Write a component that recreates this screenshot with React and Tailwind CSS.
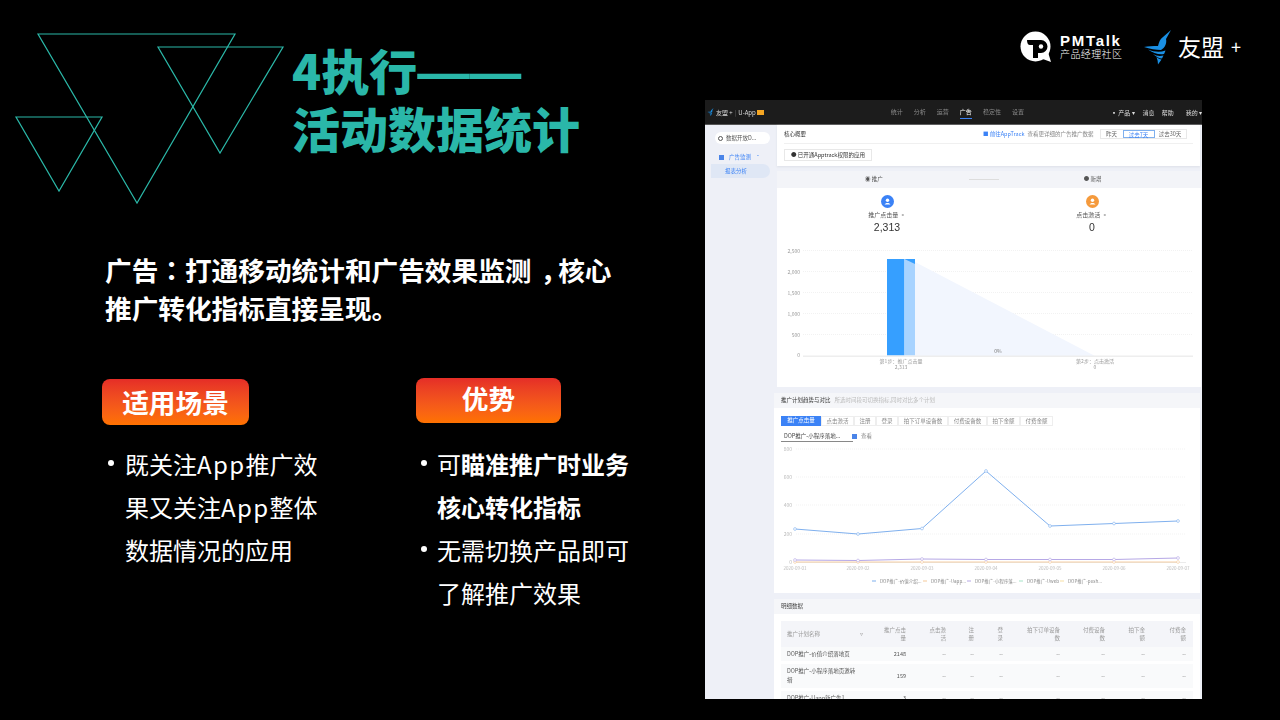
import React from "react";

const navItems = [
  { label: "统计", cls: "ml-[0px]" },
  { label: "分析", cls: "ml-[11px]" },
  { label: "运营", cls: "ml-[11px]" },
  { label: "广告", cls: "ml-[11px] text-white border-b border-[#3b82f6]" },
  { label: "稳定性", cls: "ml-[11px]" },
  { label: "设置", cls: "ml-[11px]" },
];

const tabs = [
  { label: "推广点击量", w: "w-[40px]", active: true },
  { label: "点击激活", w: "w-[33px]" },
  { label: "注册", w: "w-[22px]" },
  { label: "登录", w: "w-[22px]" },
  { label: "拍下订单设备数", w: "w-[50px]" },
  { label: "付费设备数", w: "w-[39px]" },
  { label: "拍下金额", w: "w-[33px]" },
  { label: "付费金额", w: "w-[33px]" },
];

const tableHead = [
  ["推广点击", "量"],
  ["点击激", "活"],
  ["注", "册"],
  ["登", "录"],
  ["拍下订单设备", "数"],
  ["付费设备", "数"],
  ["拍下金", "额"],
  ["付费金", "额"],
];

const tableRows = [
  { name: ["DOP推广-价值介绍落地页"], clicks: "2148", h: "h-[14px]" },
  { name: ["DOP推广-小程序落地页邀转", "措"], clicks: "159", h: "h-[24px]" },
  { name: ["DOP推广-Uapp新广告1"], clicks: "3", h: "h-[14px]" },
];

const gridCols = "grid grid-cols-[94px_36px_40px_28px_29px_57px_45px_40px_41px]";

const xs = [795, 858, 922, 986, 1050, 1114, 1178];
const dates = ["2020-09-01", "2020-09-02", "2020-09-03", "2020-09-04", "2020-09-05", "2020-09-06", "2020-09-07"];
const blueYs = [530, 535, 529.5, 472, 527, 524.5, 522];
const purpleYs = [561, 561.5, 560, 560.5, 560.5, 560.5, 559];
const orangeYs = [563, 563, 563, 563, 563, 563, 563];

const legend = [
  { x: 872, color: "#7fb0ee", label: "DOP推广-价值介绍..." },
  { x: 923, color: "#f5c99a", label: "DOP推广-Uapp..." },
  { x: 967, color: "#b6a8e6", label: "DOP推广-小程序落..." },
  { x: 1019, color: "#a5e3c8", label: "DOP推广-Uweb" },
  { x: 1060, color: "#f8dfa4", label: "DOP推广-push..." },
];

const toPoints = (ys) => ys.map((y, i) => `${xs[i]},${y}`).join(" ");

const Triangles = () => (
  <svg className="absolute left-0 top-0" width="300" height="220" fill="none" stroke="#2bb8a8" strokeWidth="1.2">
    <polygon points="38,34 235,34 137,203" />
    <polygon points="158,47 283,47 220,153" />
    <polygon points="16,117 102,117 59,191" />
  </svg>
);

const Bird = ({ className }) => (
  <svg className={className} viewBox="0 0 30 36" fill="#1a8fe3">
    <path d="M28 1 L20 8 C17 10 16 13 15 17 C10 17 5 17 1 18 C7 20 13 21 18 21 C22 19 24 14 23 10 Z" />
    <path d="M5 20.5 C11 23 17 23.5 22.5 21.5 C22 23 21.5 24 21 25 C16 26 10 24 5 20.5 Z" />
    <path d="M10 25 C13 27 17 27.5 20.5 26.5 C20 27.5 19.5 28.5 19 29.5 C16 29.5 13 27.5 10 25 Z" />
    <path d="M13.5 28 C15 29.5 17 30.5 18.5 30.5 C17.5 32 16 34 15 35.5 C15 33 14.5 30.5 13.5 28 Z" />
  </svg>
);

const PmLogo = () => (
  <svg width="32" height="32" viewBox="0 0 32 32">
    <circle cx="15.5" cy="15.5" r="15" fill="#fff" />
    <path d="M20 27 L31 31 L28 21 Z" fill="#fff" />
    <path d="M7 9 H21 A6.5 6.5 0 0 1 21 22 H18 V27 H13 V14 H10 C8 14 7 12 7 9 Z" fill="#000" />
    <circle cx="21" cy="15.5" r="2.2" fill="#fff" />
  </svg>
);

// round badge above each funnel figure
const FunnelIcon = ({ className }) => (
  <span className={`flex h-[13px] w-[13px] items-center justify-center rounded-full ${className}`}>
    <svg width="7" height="7" viewBox="0 0 7 7" fill="#fff">
      <circle cx="3.5" cy="2.2" r="1.7" />
      <path d="M0.6 6.6 C1 4.4 6 4.4 6.4 6.6 Z" />
    </svg>
  </span>
);

const ScreenTopBar = () => (
  <div className="flex h-[25px] items-center bg-[#1c1c1c] border-b border-[#555] text-[6px] text-[#8a8a8a]">
    <Bird className="ml-[2px] h-[10px] w-[8px]" />
    <span className="ml-[2px] text-[#ddd]">友盟 +</span>
    <span className="ml-[2px] text-[#666]">|</span>
    <span className="ml-[2px] text-[#ddd]">U-App</span>
    <span className="ml-[1px] h-[5px] w-[8px] bg-[#f5a623]"></span>
    <div className="ml-[127px] flex">
      {navItems.map((n) => (
        <span key={n.label} className={`${n.cls} leading-[12px]`}>
          {n.label}
        </span>
      ))}
    </div>
    <div className="ml-[87px] flex text-[#ddd]">
      <span>▪ 产品 ▾</span>
      <span className="ml-[8px]">消息</span>
      <span className="ml-[7px]">帮助</span>
      <span className="ml-[12px]">我的 ▾</span>
    </div>
  </div>
);

const ScreenSidebar = () => (
  <div className="flex w-[72px] shrink-0 flex-col items-stretch bg-[#eef0f7] pt-[7px] text-[5.5px]">
    <div className="ml-[10px] mr-[7px] flex h-[12px] items-center rounded-full bg-white pl-[3px] text-[#555]">
      <span className="h-[5px] w-[5px] rounded-full border border-[#555]"></span>
      <span className="ml-[3px]">数据开放D...</span>
    </div>
    <div className="ml-[14px] mt-[8px] flex h-[10px] items-center text-[#3b82f6]">
      <span className="h-[5px] w-[5px] bg-[#4a84e8]"></span>
      <span className="ml-[5px]">广告监测</span>
      <span className="ml-[6px]">ˆ</span>
    </div>
    <div className="ml-[6px] mr-[7px] mt-[2px] flex h-[14px] items-center rounded-r-full rounded-l-md bg-[#dfe7f5] pl-[14px] text-[#3b82f6]">
      报表分析
    </div>
  </div>
);

const CoreCard = () => (
  <div className="h-[41px] bg-white px-[7px] mr-[2px] text-[5.5px] text-[#666] shadow-[0_1px_2px_#dde0e8]">
    <div className="flex h-[19px] items-center border-b border-[#f0f0f0]">
      <span className="text-[#333]">核心概要</span>
      <span className="ml-[177px] text-[#3b82f6]">■ 前往AppTrack</span>
      <span className="ml-[3px] text-[#888]">查看更详细的广告推广数据</span>
      <div className="ml-[6px] flex h-[10px] w-[87px] shrink-0 text-center leading-[9px] border border-[#e8e8e8]">
        <span className="w-[22px]">昨天</span>
        <span className="w-[32px] border border-[#7fb0ee] text-[#3b82f6]">过去7天</span>
        <span className="flex-1">过去30天</span>
      </div>
    </div>
    <div className="mt-[5px] flex h-[12px] w-[88px] items-center justify-center border border-[#e8e8e8] text-[#333]">
      ● 已开通Apptrack权限的应用
    </div>
  </div>
);

const FunnelCard = () => (
  <div className="mt-[5px] flex h-[216px] flex-col bg-white mr-[1px]">
    <div className="flex h-[17px] items-center bg-[#f3f4f8] text-[5.5px] text-[#555]">
      <span className="ml-[88px]">◉ 推广</span>
      <span className="ml-[86px] h-[1px] w-[30px] bg-[#ddd]"></span>
      <span className="ml-[85px]">● 新增</span>
    </div>
    <div className="flex pt-[7px] text-[#555]">
      <div className="flex w-[220px] flex-col items-center">
        <FunnelIcon className="bg-[#3b82f6]" />
        <span className="mt-[2px] text-[6px]">推广点击量 ◦</span>
        <span className="mt-[2px] text-[10.5px] leading-[13px] font-['Liberation_Sans'] text-[#333]">2,313</span>
      </div>
      <div className="flex w-[190px] flex-col items-center">
        <FunnelIcon className="bg-[#f59a3c]" />
        <span className="mt-[2px] text-[6px]">点击激活 ◦</span>
        <span className="mt-[2px] text-[10.5px] leading-[13px] font-['Liberation_Sans'] text-[#333]">0</span>
      </div>
    </div>
    <svg className="mt-[10px]" width="423" height="135" viewBox="777 245 423 135" fontSize="5" fill="#999">
      {[
        ["2,500", 251.5],
        ["2,000", 272.5],
        ["1,500", 293.5],
        ["1,000", 314.5],
        ["500", 335.5],
      ].map(([t, y]) => (
        <g key={t}>
          <line x1="803" x2="1193" y1={y} y2={y} stroke="#efefef" strokeWidth="0.8" strokeDasharray="1 1" />
          <text x="800" y={y + 2} textAnchor="end">{t}</text>
        </g>
      ))}
      <text x="800" y="358" textAnchor="end">0</text>
      <polygon points="915,263 1095,357 915,357" fill="#f2f6fe" />
      <rect x="887" y="260" width="17.5" height="96.5" fill="#369fff" />
      <rect x="904.5" y="260" width="10.5" height="96.5" fill="#a8d3ff" />
      <polygon points="904.5,260 915,260 915,265" fill="#369fff" />
      <rect x="803" y="356.5" width="390" height="1.5" fill="#eeeeee" />
      <text x="901" y="364" textAnchor="middle">第1步：推广点击量</text>
      <text x="901" y="370" textAnchor="middle">2,313</text>
      <text x="998" y="354" textAnchor="middle" fill="#777">0%</text>
      <text x="1095" y="364" textAnchor="middle">第2步：点击激活</text>
      <text x="1095" y="370" textAnchor="middle">0</text>
    </svg>
  </div>
);

const TrendCard = () => (
  <div className="ml-[-3px] mt-[6px] mr-[2px] flex h-[200px] flex-col bg-white">
    <div className="flex h-[15px] items-center bg-[#f5f6f9] pl-[7px] text-[5.5px]">
      <span className="text-[#333]">推广计划趋势与对比</span>
      <span className="ml-[4px] text-[#bbb]">所选时间段可切换指标,同时对比多个计划</span>
    </div>
    <div className="ml-[7px] mt-[8px] flex text-[5.5px] text-[#888]">
      {tabs.map((t) => (
        <span
          key={t.label}
          className={`${t.w} h-[10px] text-center leading-[9px] ${t.active ? "bg-[#3b82f6] text-white" : "border border-[#eee]"}`}
        >
          {t.label}
        </span>
      ))}
    </div>
    <div className="ml-[7px] mt-[5px] flex h-[11px] items-center text-[5.5px]">
      <span className="flex h-full w-[72px] items-center border-b border-[#888] pl-[3px] text-[#444]">DOP推广-小程序落地...</span>
      <span className="ml-[-1px] h-[5px] w-[5px] bg-[#4a84e8]"></span>
      <span className="ml-[4px] text-[#888]">查看</span>
    </div>
    <svg className="mt-[2px]" width="424" height="144" viewBox="774 445 424 144" fontSize="5" fill="#bbb">
      {[
        ["800", 450],
        ["600", 478],
        ["400", 506],
        ["200", 535],
      ].map(([t, y]) => (
        <g key={t}>
          <line x1="796" x2="1186" y1={y} y2={y} stroke="#f0f0f0" strokeWidth="0.8" strokeDasharray="1 1" />
          <text x="792" y={y + 2} textAnchor="end">{t}</text>
        </g>
      ))}
      <text x="792" y="565" textAnchor="end">0</text>
      <line x1="796" x2="1186" y1="563.5" y2="563.5" stroke="#e6e6e6" strokeWidth="0.8" />
      <polyline points={toPoints(orangeYs)} fill="none" stroke="#f5c99a" strokeWidth="0.9" />
      <polyline points={toPoints(purpleYs)} fill="none" stroke="#b6a8e6" strokeWidth="1" />
      <polyline points={toPoints(blueYs)} fill="none" stroke="#7fb0ee" strokeWidth="1" />
      {xs.map((x, i) => (
        <g key={x} fill="#fff" strokeWidth="0.6">
          <circle cx={x} cy={orangeYs[i]} r="1.4" stroke="#f5c99a" />
          <circle cx={x} cy={purpleYs[i]} r="1.4" stroke="#b6a8e6" />
          <circle cx={x} cy={blueYs[i]} r="1.4" stroke="#7fb0ee" />
        </g>
      ))}
      {xs.map((x, i) => (
        <text key={dates[i]} x={x} y="570.5" textAnchor="middle" fontSize="4.5">{dates[i]}</text>
      ))}
      {legend.map((l) => (
        <g key={l.x}>
          <rect x={l.x} y="581.5" width="4" height="1" fill={l.color} />
          <text x={l.x + 8} y="584" fontSize="4.5" fill="#888">{l.label}</text>
        </g>
      ))}
    </svg>
  </div>
);

const DetailCard = () => (
  <div className="ml-[-3px] mt-[6px] mr-[2px] flex-1 overflow-hidden bg-white">
    <div className="flex h-[15px] items-center bg-[#f5f6f9] pl-[7px] text-[5.5px] text-[#444]">明细数据</div>
    <div className="mx-[7px] mt-[7px] text-[5.5px] text-[#555]">
      <div className={`${gridCols} h-[26px] items-center bg-[#f4f5f9] text-[#999]`}>
        <div className="flex justify-between pl-[6px] pr-[12px]">
          <span>推广计划名称</span>
          <span>▿</span>
        </div>
        {tableHead.map((h) => (
          <div key={h[0]} className="pr-[5px] text-right leading-[8px]">
            {h[0]}
            <br />
            {h[1]}
          </div>
        ))}
      </div>
      {tableRows.map((r) => (
        <div key={r.clicks} className={`${gridCols} ${r.h} mb-[3px] items-center bg-[#f9fafb]`}>
          <div className="pl-[6px] leading-[9px]">
            {r.name.map((n) => (
              <div key={n}>{n}</div>
            ))}
          </div>
          <div className="pr-[5px] text-right">{r.clicks}</div>
          {[0, 1, 2, 3, 4, 5, 6].map((i) => (
            <div key={i} className="pr-[5px] text-right text-[#999]">--</div>
          ))}
        </div>
      ))}
    </div>
  </div>
);

const AppShot = () => (
  <div className="mt-[36px] flex h-[599px] w-[497px] flex-col overflow-hidden whitespace-nowrap bg-[#eef0f7] blur-[0.5px]">
    <ScreenTopBar />
    <div className="flex min-h-0 flex-1">
      <ScreenSidebar />
      <div className="flex min-w-0 flex-1 flex-col">
        <CoreCard />
        <FunnelCard />
        <TrendCard />
        <DetailCard />
      </div>
    </div>
  </div>
);

const AppWord = () => <span className="tracking-[1.4px]">App</span>;

export default function App() {
  return (
    <div className="relative flex h-[720px] w-[1280px] overflow-hidden bg-black font-['Noto_Sans_CJK_SC',sans-serif] text-white">
      <Triangles />

      {/* left side of the slide */}
      <div className="relative w-[705px] shrink-0">
        <h1 className="ml-[292px] mt-[40px] text-[48px] font-black leading-[58px] text-[#2ab7a9]">
          4执行
          <span className="font-['Liberation_Sans'] text-[52px] leading-[0]">——</span>
          <br />
          活动数据统计
        </h1>
        <p className="ml-[105px] mt-[95px] w-[520px] text-[26.67px] font-bold leading-[38px]">
          广告<span className="font-['Noto_Sans_CJK_TC']">：</span>打通移动统计和广告效果监测
          <span className="inline-block translate-x-[9px]">，</span>核心
          <br />
          推广转化指标直接呈现。
        </p>

        <div className="ml-[102px] mt-[52px] flex items-start">
          <div className="w-[314px]">
            <div className="flex h-[46px] w-[147px] items-center justify-center rounded-lg bg-gradient-to-b from-[#e52d27] to-[#ff7200] text-[26.67px] font-bold">
              适用场景
            </div>
            <ul className="mt-[17px] text-[24px] leading-[43px]">
              <li className="relative pl-[23px]">
                <span className="absolute left-[6px] top-[18px] h-[6px] w-[6px] rounded-full bg-white"></span>
                既关注<AppWord />推广效
                <br />
                果又关注<AppWord />整体
                <br />
                数据情况的应用
              </li>
            </ul>
          </div>
          <div className="-mt-[1px]">
            <div className="flex h-[45px] w-[145px] items-center justify-center rounded-lg bg-gradient-to-b from-[#e52d27] to-[#ff7200] pb-[5px] text-[26.67px] font-bold">
              优势
            </div>
            <ul className="mt-[19px] text-[24px] leading-[43px]">
              <li className="relative pl-[21px]">
                <span className="absolute left-[5px] top-[18px] h-[6px] w-[6px] rounded-full bg-white"></span>
                可<b>瞄准推广时业务</b>
                <br />
                <b>核心转化指标</b>
              </li>
              <li className="relative pl-[21px]">
                <span className="absolute left-[5px] top-[18px] h-[6px] w-[6px] rounded-full bg-white"></span>
                无需切换产品即可
                <br />
                了解推广效果
              </li>
            </ul>
          </div>
        </div>
      </div>

      {/* right side: logos and product screenshot */}
      <div className="flex flex-1 flex-col pt-[29px]">
        <div className="flex h-[35px] items-center">
          <div className="ml-[315px]">
            <PmLogo />
          </div>
          <div className="ml-[8px] flex w-[64px] flex-col">
            <span className="font-['Liberation_Sans'] text-[15px] font-bold leading-[15px] tracking-[1.7px]">PMTalk</span>
            <span className="text-[10px] font-light leading-[12px] tracking-[0.4px]">产品经理社区</span>
          </div>
          <Bird className="ml-[19px] h-[36px] w-[30px]" />
          <span className="ml-[5px] text-[23px] leading-[35px]">友盟</span>
          <span className="ml-[7px] text-[18px] leading-[35px]">+</span>
        </div>
        <AppShot />
      </div>
    </div>
  );
}
